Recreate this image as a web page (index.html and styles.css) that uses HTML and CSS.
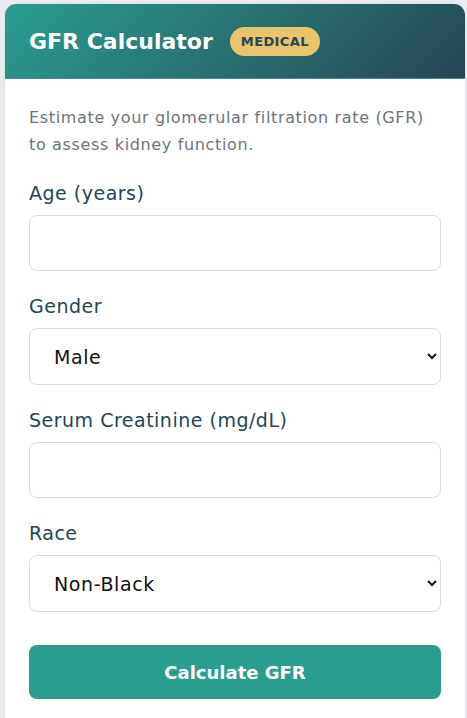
FILE: index.html
```html
<!DOCTYPE html>
<html lang="en">
<head>
<meta charset="utf-8">
<title>GFR Calculator</title>
<link rel="stylesheet" href="styles.css">
</head>
<body>
<div class="card">
  <div class="card-header">
    <h1 class="title">GFR Calculator</h1>
    <span class="badge">MEDICAL</span>
  </div>
  <div class="card-body">
    <p class="desc">Estimate your glomerular filtration rate (GFR) to assess kidney function.</p>
    <div class="field">
      <label class="label" for="age">Age (years)</label>
      <input class="control" id="age" type="number">
    </div>
    <div class="field">
      <label class="label" for="gender">Gender</label>
      <select class="control select" id="gender">
        <option>Male</option>
        <option>Female</option>
      </select>
    </div>
    <div class="field">
      <label class="label" for="scr">Serum Creatinine (mg/dL)</label>
      <input class="control" id="scr" type="number">
    </div>
    <div class="field">
      <label class="label" for="race">Race</label>
      <select class="control select" id="race">
        <option>Non-Black</option>
        <option>Black</option>
      </select>
    </div>
    <button class="btn" type="button">Calculate GFR</button>
  </div>
</div>
</body>
</html>
```
FILE: styles.css
```css
* { box-sizing: border-box; }
html, body { margin: 0; }
body {
  background: #e9ecef;
  padding: 3px 0 0 4px;
  font-family: "DejaVu Sans", "Open Sans", sans-serif;
  overflow: hidden;
}
.card {
  width: 462px;
  background: #fff;
  border: 1px solid #dfe3e6;
  border-radius: 12px 12px 0 0;
  overflow: hidden;
  min-height: 720px;
}
.card-header {
  height: 75px;
  background: linear-gradient(135deg, #2a9d8f 0%, #264653 100%);
  display: flex;
  align-items: center;
  padding: 0 24px;
  gap: 17px;
  border-bottom: 1px solid #4a8f8a;
}
.title {
  margin: 0;
  color: #fff;
  font-size: 22px;
  font-weight: 700;
}
.badge {
  background: #e9c46a;
  color: #264653;
  font-size: 13px;
  font-weight: 600;
  line-height: 18px;
  padding: 6px 11px 5px;
  border-radius: 15px;
  letter-spacing: 0.4px;
}
.card-body {
  padding: 25px 24px 24px;
}
.desc {
  margin: 0 0 22px;
  color: #6c757d;
  font-size: 16px;
  letter-spacing: 0.65px;
  line-height: 27px;
}
.field {
  margin-bottom: 22px;
}
.label {
  display: block;
  color: #264653;
  font-size: 19px;
  letter-spacing: 0.5px;
  line-height: 27px;
  margin-bottom: 8px;
}
.control {
  display: block;
  width: 100%;
  height: 56px;
  border: 1px solid #dcdcdc;
  border-radius: 8px;
  background: #fff;
  font-family: inherit;
  font-size: 19px;
  letter-spacing: 0.6px;
  color: #111;
  padding: 0 16px;
}
.select {
  height: 57px;
  padding-left: 20px;
}
.btn {
  display: block;
  width: 100%;
  height: 54px;
  margin-top: 33px;
  border: none;
  border-radius: 8px;
  background: #2a9d8f;
  color: #fff;
  font-family: inherit;
  font-size: 18px;
  font-weight: 700;
}
```
